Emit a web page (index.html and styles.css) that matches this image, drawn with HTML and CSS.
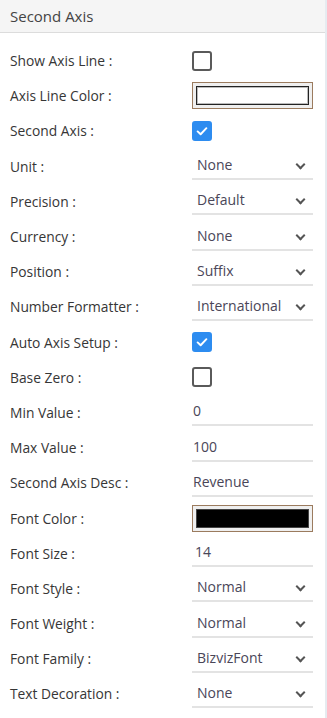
FILE: index.html
```html
<!DOCTYPE html>
<html lang="en">
<head>
    <meta charset="UTF-8">
    <title>Second Axis</title>
    <link rel="stylesheet" href="styles.css">
</head>
<body>
    <div class="panel">
        <div class="panel-head">Second Axis</div>
        <div class="panel-body">
            <div class="row"><label>Show Axis Line :</label><div class="ctl"><span class="check"></span></div></div>
            <div class="row"><label>Axis Line Color :</label><div class="ctl"><span class="color"><span class="swatch white"></span></span></div></div>
            <div class="row"><label>Second Axis :</label><div class="ctl"><span class="check on"><svg viewBox="0 0 20 20"><path d="M4.5 10.5l3.8 3.6 7.2-7.6" /></svg></span></div></div>
            <div class="row"><label>Unit :</label><div class="ctl"><div class="select">None<i></i></div></div></div>
            <div class="row"><label>Precision :</label><div class="ctl"><div class="select">Default<i></i></div></div></div>
            <div class="row"><label>Currency :</label><div class="ctl"><div class="select">None<i></i></div></div></div>
            <div class="row"><label>Position :</label><div class="ctl"><div class="select">Suffix<i></i></div></div></div>
            <div class="row"><label>Number Formatter :</label><div class="ctl"><div class="select">International<i></i></div></div></div>
            <div class="row"><label>Auto Axis Setup :</label><div class="ctl"><span class="check on"><svg viewBox="0 0 20 20"><path d="M4.5 10.5l3.8 3.6 7.2-7.6" /></svg></span></div></div>
            <div class="row"><label>Base Zero :</label><div class="ctl"><span class="check"></span></div></div>
            <div class="row"><label>Min Value :</label><div class="ctl"><div class="input">0</div></div></div>
            <div class="row"><label>Max Value :</label><div class="ctl"><div class="input">100</div></div></div>
            <div class="row"><label>Second Axis Desc :</label><div class="ctl"><div class="input">Revenue</div></div></div>
            <div class="row"><label>Font Color :</label><div class="ctl"><span class="color"><span class="swatch black"></span></span></div></div>
            <div class="row"><label>Font Size :</label><div class="ctl"><div class="input pad">14</div></div></div>
            <div class="row"><label>Font Style :</label><div class="ctl"><div class="select">Normal<i></i></div></div></div>
            <div class="row"><label>Font Weight :</label><div class="ctl"><div class="select">Normal<i></i></div></div></div>
            <div class="row"><label>Font Family :</label><div class="ctl"><div class="select">BizvizFont<i></i></div></div></div>
            <div class="row"><label>Text Decoration :</label><div class="ctl"><div class="select">None<i></i></div></div></div>
        </div>
    </div>
</body>
</html>
```

FILE: styles.css
```css
body {
    margin: 0;
    background: #ffffff;
    font-family: 'Open Sans', 'Lato', sans-serif;
    color: #333;
}

.panel {
    width: 325px;
    border-right: 2px solid #e6ebf0;
    min-height: 718px;
}

.panel-head {
    height: 32px;
    line-height: 32px;
    padding-left: 10px;
    background: #f5f5f5;
    border-bottom: 1px solid #dcdcdc;
    font-size: 15px;
    color: #444;
}

.panel-body {
    padding-top: 10px;
}

/* 한 줄: 라벨 + 컨트롤 */
.row {
    display: flex;
    align-items: center;
    height: 35.2px;
    padding-left: 10px;
}

.row label {
    width: 182px;
    font-size: 13.8px;
    color: #363636;
}

.ctl {
    width: 121px;
    height: 100%;
    display: flex;
    align-items: center;
}

.check {
    width: 16px;
    height: 16px;
    border: 2px solid #5a5a5a;
    border-radius: 3px;
    display: flex;
    align-items: center;
    justify-content: center;
}

.check.on {
    background: #2d8cf0;
    border-color: #2d8cf0;
}

.check svg {
    width: 20px;
    height: 20px;
    fill: none;
    stroke: #fff;
    stroke-width: 2.4;
    stroke-linecap: round;
    stroke-linejoin: round;
}

.color {
    width: 121px;
    height: 27px;
    border: 1px solid #9b7b5e;
    background: #efefef;
    display: flex;
    padding: 3px;
    box-sizing: border-box;
}

.swatch {
    flex: 1;
    border: 1px solid #222;
    box-shadow: inset 0 0 0 1px #bbb;
}

.swatch.white {
    background: #fff;
}

.swatch.black {
    background: #000;
    border-color: #444;
    box-shadow: none;
}

.select,
.input {
    position: relative;
    width: 100%;
    height: 28px;
    line-height: 26px;
    border-bottom: 2px solid #e3e3e3;
    font-size: 14px;
    color: #4a4658;
    box-sizing: border-box;
}

.select {
    padding-left: 5px;
}

.input {
    padding-left: 1px;
}

.input.pad {
    padding-left: 3px;
}

/* 화살표 */
.select i {
    position: absolute;
    right: 9px;
    top: 9px;
    width: 5px;
    height: 5px;
    border-right: 2px solid #555;
    border-bottom: 2px solid #555;
    transform: rotate(45deg);
}
```
